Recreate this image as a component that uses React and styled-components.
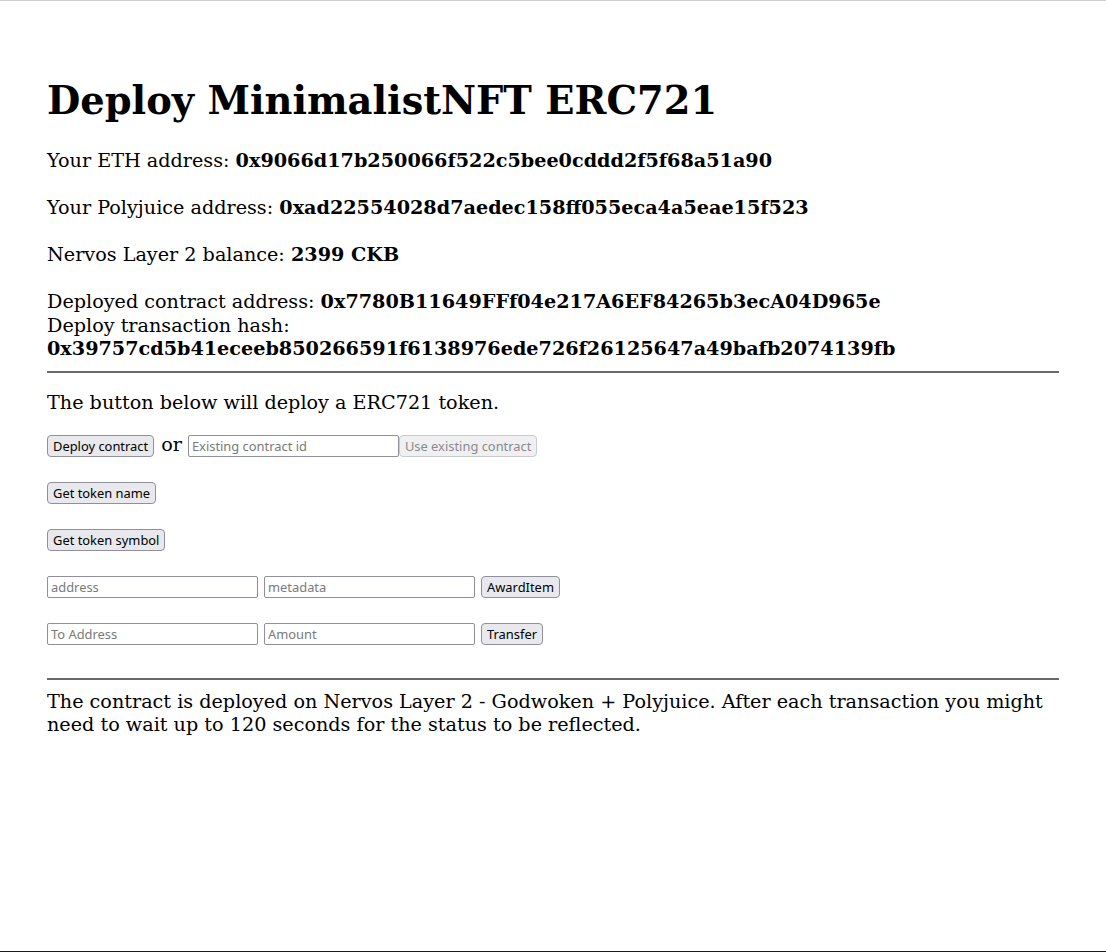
import React from "react";
import styled, { createGlobalStyle } from "styled-components";

const GlobalStyle = createGlobalStyle`
  html, body {
    margin: 0;
    padding: 0;
    background: #ffffff;
  }
  body {
    font-family: "DejaVu Serif", serif;
    color: #000000;
  }
  * { box-sizing: border-box; }
`;

const Page = styled.div`
  min-height: 952px;
  border-top: 1px solid #cfcfcf;
  border-bottom: 1px solid #1a1a1a;
  padding: 76px 47px 0;
  font-family: "DejaVu Serif", serif;
  font-size: 19.2px;
`;

const Title = styled.h1`
  margin: 0 0 25px;
  font-size: 38.4px;
  line-height: 47px;
  font-weight: bold;
`;

const InfoList = styled.div`
  display: flex;
  flex-direction: column;
  gap: 23.5px;
`;

const Line = styled.div`
  line-height: 23.5px;
`;

const Value = styled.b`
  font-weight: bold;
`;

const Rule = styled.hr`
  margin: ${(p) => p.$top}px 0 ${(p) => p.$bottom}px;
  border: none;
  border-top: 2px solid #6a6a6a;
  height: 0;
`;

const Controls = styled.div`
  display: flex;
  flex-direction: column;
  gap: 23px;
  margin-top: 20px;
`;

const Row = styled.div`
  display: flex;
  align-items: center;
  height: 24px;
  gap: 6px;
`;

const Or = styled.span`
  font-size: 19.2px;
  line-height: 24px;
  margin: 0 0 2px 1px;
`;

const Button = styled.button`
  font-family: "Noto Sans", "Open Sans", sans-serif;
  font-size: 12.9px;
  height: 22px;
  padding: 0 5px;
  color: ${(p) => (p.disabled ? "#8a8a8e" : "#000")};
  border: 1px solid ${(p) => (p.disabled ? "#c9c9d0" : "#8f8f9d")};
  border-radius: 4px;
  cursor: default;
  background: ${(p) => (p.disabled ? "#f0f0f3" : "#e9e9ed")};
  white-space: nowrap;
`;

const Input = styled.input`
  font-family: "Noto Sans", "Open Sans", sans-serif;
  font-size: 12.9px;
  width: 211px;
  height: 22px;
  padding: 0 3px;
  border: 1px solid #8f8f9d;
  border-radius: 2px;
  background: #fff;
  color: #000;
  &::placeholder {
    color: #7a7a7a;
  }
`;

const Pair = styled.div`
  display: flex;
  align-items: center;
`;

const Footer = styled.p`
  margin: 0;
  line-height: 23px;
`;

export default function App() {
  return (
    <>
      <GlobalStyle />
      <Page>
        <Title>Deploy MinimalistNFT ERC721</Title>
        <InfoList>
          <Line>
            Your ETH address: <Value>0x9066d17b250066f522c5bee0cddd2f5f68a51a90</Value>
          </Line>
          <Line>
            Your Polyjuice address: <Value>0xad22554028d7aedec158ff055eca4a5eae15f523</Value>
          </Line>
          <Line>
            Nervos Layer 2 balance: <Value>2399 CKB</Value>
          </Line>
          <div>
            <Line>
              Deployed contract address: <Value>0x7780B11649FFf04e217A6EF84265b3ecA04D965e</Value>
            </Line>
            <Line>Deploy transaction hash:</Line>
            <Line>
              <Value>0x39757cd5b41eceeb850266591f6138976ede726f26125647a49bafb2074139fb</Value>
            </Line>
          </div>
        </InfoList>
        <Rule $top={10} $bottom={18} />
        <Line>The button below will deploy a ERC721 token.</Line>
        <Controls>
          <Row>
            <Button>Deploy contract</Button>
            <Or>or</Or>
            <Pair>
              <Input placeholder="Existing contract id" />
              <Button disabled>Use existing contract</Button>
            </Pair>
          </Row>
          <Row>
            <Button>Get token name</Button>
          </Row>
          <Row>
            <Button>Get token symbol</Button>
          </Row>
          <Row>
            <Input placeholder="address" />
            <Input placeholder="metadata" />
            <Button>AwardItem</Button>
          </Row>
          <Row>
            <Input placeholder="To Address" />
            <Input placeholder="Amount" />
            <Button>Transfer</Button>
          </Row>
        </Controls>
        <Rule $top={32} $bottom={10} />
        <Footer>
          The contract is deployed on Nervos Layer 2 - Godwoken + Polyjuice. After each
          transaction you might need to wait up to 120 seconds for the status to be reflected.
        </Footer>
      </Page>
    </>
  );
}
